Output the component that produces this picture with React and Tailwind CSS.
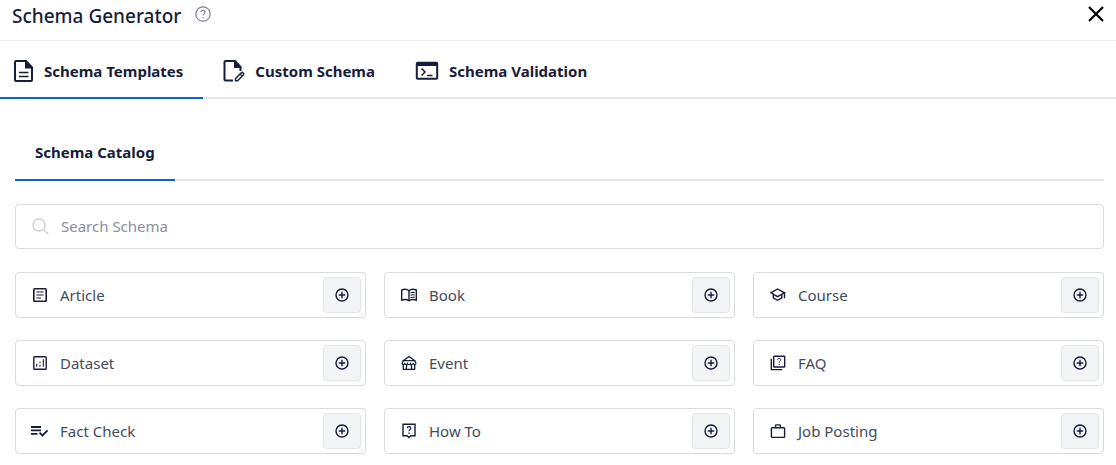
import React, { useState } from "react";

const icons = {
    article: <>
        <rect x="1.8" y="1.8" width="12.4" height="12.4" rx="0.8" strokeWidth="1.6" />
        <path d="M4.4 5h7.2M4.4 8h7.2M4.4 11h4.6" strokeWidth="1.2" />
    </>,
    book: <>
        <path d="M8 3.7C6.2 2.2 2.8 2.2.7 3v10.2c2.1-.8 5.5-.8 7.3.5 1.8-1.3 5.2-1.3 7.3-.5V3C13.2 2.2 9.8 2.2 8 3.7z" strokeWidth="1.4" />
        <path d="M8 3.7v10" strokeWidth="1.4" />
        <path d="M9.5 5.8c1.4-.5 2.8-.5 4.2-.2M9.5 8.2c1.4-.5 2.8-.5 4.2-.2M9.5 10.6c1.4-.5 2.8-.5 4.2-.2" strokeWidth="1.1" />
    </>,
    course: <>
        <path d="M7.5 2L1 5.8l6.500 3.800L14.500 5.800z" strokeWidth="1.4" />
        <path d="M3.300 7.400v3.500l4.200 2.400 4.300-2.400V7.400M14.500 5.800v5.500" strokeWidth="1.4" />
    </>,
    dataset: <>
        <rect x="1.8" y="1.8" width="12.4" height="12.4" rx="0.8" strokeWidth="1.4" />
        <path d="M4.700 8.700v3M8 9.800v1.900M8 6.700v1.500M11.300 4.300v7.400" strokeWidth="1.1" />
    </>,
    event: <>
        <path d="M8 1.600L2.300 5.700h11.400z" strokeWidth="1.2" />
        <path d="M2.400 5.700L1 8.600c.5 1.300 2.200 1.300 2.800 0 .6 1.300 2.200 1.300 2.800 0 .5 1.300 2.300 1.300 2.800 0 .6 1.300 2.200 1.300 2.800 0 .6 1.300 2.300 1.300 2.800 0l-1.400-2.900" strokeWidth="1.2" />
        <path d="M2.300 9.500v4.800h2.900l.6-4.700M13.700 9.500v4.800h-2.900l-.6-4.700M5.200 14.300h5.600" strokeWidth="1.3" />
    </>,
    faq: <>
        <rect x="3.700" y="1.200" width="11" height="10.800" rx="0.6" strokeWidth="1.4" />
        <path d="M1.300 3.700v10.900h11" strokeWidth="1.4" />
        <path d="M7.600 4.900c0-2 3.200-2 3.200 0 0 1.200-1.600 1.300-1.600 2.700M9.200 8.900v1.200" strokeWidth="1" />
    </>,
    factcheck: <>
        <path d="M-1 4H9M-1 7.400H9M-1 10.800h6.500" strokeWidth="1.8" />
        <path d="M7.500 9.600l2.900 2.900 5.200-5.200" strokeWidth="1.8" />
    </>,
    howto: <>
        <path d="M2 1.300h12v11.400H9.800L8 14.500l-1.800-1.800H2z" strokeWidth="1.4" />
        <path d="M6.200 5.300c0-2.200 3.600-2.200 3.600 0 0 1.300-1.800 1.400-1.800 3M8 9.500v1.400" strokeWidth="1.2" />
    </>,
    job: <>
        <rect x="1.4" y="4.7" width="13.200" height="9.700" rx="0.9" strokeWidth="1.4" />
        <path d="M5.600 4.500V2.600c0-.4.300-.7.700-.7h3.400c.4 0 .7.300.7.700v1.900" strokeWidth="1.4" />
    </>
}

const schemas = [
    { name: "Article", icon: "article" },
    { name: "Book", icon: "book" },
    { name: "Course", icon: "course" },
    { name: "Dataset", icon: "dataset" },
    { name: "Event", icon: "event" },
    { name: "FAQ", icon: "faq" },
    { name: "Fact Check", icon: "factcheck" },
    { name: "How To", icon: "howto" },
    { name: "Job Posting", icon: "job" }
]

function TemplateIcon(){
    return (
        <svg width="20" height="24" viewBox="0 0 20 24" fill="none" stroke="currentColor" strokeWidth="2">
            <path d="M2 2h10l6 6.500v12.500a1 1 0 0 1-1 1H2a1 1 0 0 1-1-1V3a1 1 0 0 1 1-1z" />
            <path d="M11 2v7.500h7.500z" fill="currentColor" stroke="none" />
            <path d="M5 13.500h9.500M5 17.500h9.500" strokeWidth="1.5" />
        </svg>
    )
}

function CustomIcon(){
    return (
        <svg width="22" height="24" viewBox="0 0 22 24" fill="none" stroke="currentColor" strokeWidth="2">
            <path d="M10 21.500H2.500a1 1 0 0 1-1-1V3a1 1 0 0 1 1-1H11.500L17.500 8v4" />
            <path d="M11 2v7h7.500V8L12.500 1z" fill="currentColor" stroke="none" />
            <path d="M12.500 19.600l5.900-5.900a1 1 0 0 1 1.400 0l.7.700a1 1 0 0 1 0 1.400l-5.900 5.900h-2.100z" strokeWidth="1.4" />
            <path d="M17 15l2.200 2.200" strokeWidth="1.2" />
        </svg>
    )
}

function ValidationIcon(){
    return (
        <svg width="24" height="20" viewBox="0 0 24 20" fill="none" stroke="currentColor">
            <rect x="1.8" y="1.8" width="20.400" height="16" rx="1" strokeWidth="2" />
            <path d="M1.800 3h20.400" strokeWidth="4" />
            <path d="M6.500 7.500l3.500 3.500-3.500 3.500M12 14.500h5.500" strokeWidth="1.5" />
        </svg>
    )
}

const tabs = [
    { name: "Schema Templates", icon: <TemplateIcon />, style: "pl-3.5 pr-5" },
    { name: "Custom Schema", icon: <CustomIcon />, style: "px-5" },
    { name: "Schema Validation", icon: <ValidationIcon />, style: "px-5" }
]

function SchemaCard({ name, icon }){
    return (
        <div className="flex h-[46px] items-center rounded border border-[#d9dbe0] pl-4 pr-1">
            <svg className="mr-3 shrink-0 overflow-visible" width="16" height="16" viewBox="0 0 16 16" fill="none" stroke="currentColor">
                {icons[icon]}
            </svg>
            <span className="flex-1 text-[15px] text-[#454b5c]">{name}</span>
            <button aria-label={`Add ${name}`} className="flex h-9 w-[38px] items-center justify-center rounded border border-[#e3e5e9] bg-[#f3f4f6]">
                <svg width="14" height="14" viewBox="0 0 14 14" fill="none" stroke="currentColor" strokeWidth="1.4">
                    <circle cx="7" cy="7" r="6" />
                    <path d="M7 3.800v6.400M3.800 7h6.400" />
                </svg>
            </button>
        </div>
    )
}

function App(){
    const [active,setActive] = useState("Schema Templates")
    const [search,setSearch] = useState("")
    const list = schemas.filter(s=>s.name.toLowerCase().includes(search.toLowerCase()))

    return (
        <div className="w-full bg-white font-['Noto_Sans',sans-serif] text-[#171c3a]">
            <header className="flex h-[41px] items-start justify-between border-b border-[#ebecef] pl-3 pr-3">
                <div className="flex items-start gap-3.5">
                    <h1 className="text-[19px] font-medium leading-8">Schema Generator</h1>
                    <button aria-label="Help" className="mt-1.5 text-[#7c8092]">
                        <svg width="16" height="16" viewBox="0 0 16 16" fill="none" stroke="currentColor" strokeWidth="1.2">
                            <circle cx="8" cy="8" r="7.2" />
                            <path d="M5.900 6.300c0-2.700 4.200-2.700 4.200 0 0 1.600-2.100 1.600-2.100 3.300M8 10.900v1.300" />
                        </svg>
                    </button>
                </div>
                <button aria-label="Close" className="mt-1.5 text-black">
                    <svg width="16" height="16" viewBox="0 0 16 16" fill="none" stroke="currentColor" strokeWidth="2.2">
                        <path d="M1 1l14 14M15 1L1 15" />
                    </svg>
                </button>
            </header>

            <nav className="flex h-[58px] border-b-2 border-[#e5e6ea]">
                {tabs.map(tab=>(
                    <button
                        key={tab.name}
                        onClick={()=>setActive(tab.name)}
                        className={`-mb-0.5 flex items-center gap-2.5 border-b-2 pt-1 text-[15px] font-bold ${tab.style} ${active===tab.name ? "border-[#0b5fe0]" : "border-transparent"}`}
                    >
                        {tab.icon}
                        <span>{tab.name}</span>
                    </button>
                ))}
            </nav>

            <main className="pb-2 pl-[15px] pr-3 pt-[26px]">
                <div className="flex h-14 border-b-2 border-[#e5e6ea]">
                    <button className="-mb-0.5 border-b-2 border-[#0b5fe0] px-5 text-[15px] font-bold">Schema Catalog</button>
                </div>

                <label className="mt-[23px] flex h-[45px] items-center gap-3 rounded-sm border border-[#d9dbe0] px-4">
                    <svg className="shrink-0 text-[#cfd1d8]" width="17" height="17" viewBox="0 0 17 17" fill="none" stroke="currentColor" strokeWidth="1.5">
                        <circle cx="7" cy="7" r="6" />
                        <path d="M11.300 11.300l5 5" />
                    </svg>
                    <input
                        type="text"
                        aria-label="Search Schema"
                        placeholder="Search Schema"
                        value={search}
                        onChange={(e)=>setSearch(e.target.value)}
                        className="w-full text-[15px] outline-none placeholder:text-[#8d909e]"
                    />
                </label>

                <div className="mt-[23px] grid grid-cols-3 gap-x-[18px] gap-y-[22px]">
                    {list.map(s=><SchemaCard key={s.name} name={s.name} icon={s.icon} />)}
                </div>
            </main>
        </div>
    )
}

export default App
